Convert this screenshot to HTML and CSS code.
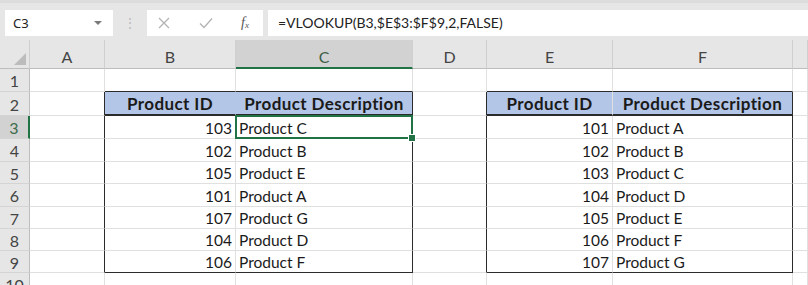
FILE: index.html
```html
<!DOCTYPE html>
<html>
<head>
<meta charset="utf-8">
<link rel="stylesheet" href="styles.css">
</head>
<body>
<div class="app">
  <div class="fbar">
    <div class="namebox"><span class="nb-text">C3</span><span class="nb-arrow"></span></div>
    <div class="grip">⋮</div>
    <div class="fbtns">
      <svg class="ic" width="14" height="14" viewBox="0 0 14 14"><path d="M2 2 L12 12 M12 2 L2 12" stroke="#b3b3b3" stroke-width="1.3" fill="none"/></svg>
      <svg class="ic" width="16" height="14" viewBox="0 0 16 14"><path d="M2 7.5 L6 11.5 L14 2.5" stroke="#b3b3b3" stroke-width="1.3" fill="none"/></svg>
      <span class="fx">f<sub>x</sub></span>
    </div>
    <div class="formula">=VLOOKUP(B3,$E$3:$F$9,2,FALSE)</div>
  </div>
  <div class="sheet">
    <div class="ch corner"><span class="tri"></span></div>
    <div class="ch">A</div>
    <div class="ch">B</div>
    <div class="ch sel">C</div>
    <div class="ch">D</div>
    <div class="ch">E</div>
    <div class="ch">F</div>
    <div class="ch"></div>

    <div class="rh">1</div>
    <div class="c"></div><div class="c tb"></div><div class="c tb"></div><div class="c"></div><div class="c tb"></div><div class="c tb"></div><div class="c"></div>

    <div class="rh r2">2</div>
    <div class="c lb"></div><div class="c hd hsep">Product ID</div><div class="c hd rb">Product Description</div><div class="c lb"></div><div class="c hd">Product ID</div><div class="c hd rb">Product Description</div><div class="c"></div>

    <div class="rh rsel">3</div>
    <div class="c lb"></div><div class="c num top">103</div><div class="c txt rb top active">Product C</div><div class="c lb"></div><div class="c num top">101</div><div class="c txt rb top">Product A</div><div class="c"></div>

    <div class="rh">4</div>
    <div class="c lb"></div><div class="c num">102</div><div class="c txt rb">Product B</div><div class="c lb"></div><div class="c num">102</div><div class="c txt rb">Product B</div><div class="c"></div>

    <div class="rh">5</div>
    <div class="c lb"></div><div class="c num">105</div><div class="c txt rb">Product E</div><div class="c lb"></div><div class="c num">103</div><div class="c txt rb">Product C</div><div class="c"></div>

    <div class="rh">6</div>
    <div class="c lb"></div><div class="c num">101</div><div class="c txt rb">Product A</div><div class="c lb"></div><div class="c num">104</div><div class="c txt rb">Product D</div><div class="c"></div>

    <div class="rh">7</div>
    <div class="c lb"></div><div class="c num">107</div><div class="c txt rb">Product G</div><div class="c lb"></div><div class="c num">105</div><div class="c txt rb">Product E</div><div class="c"></div>

    <div class="rh">8</div>
    <div class="c lb"></div><div class="c num">104</div><div class="c txt rb">Product D</div><div class="c lb"></div><div class="c num">106</div><div class="c txt rb">Product F</div><div class="c"></div>

    <div class="rh">9</div>
    <div class="c lb"></div><div class="c num bb">106</div><div class="c txt rb bb">Product F</div><div class="c lb"></div><div class="c num bb">107</div><div class="c txt rb bb">Product G</div><div class="c"></div>

    <div class="rh">10</div>
    <div class="c"></div><div class="c"></div><div class="c"></div><div class="c"></div><div class="c"></div><div class="c"></div><div class="c"></div>
  </div>
</div>
</body>
</html>
```

FILE: styles.css
```css
* { box-sizing: border-box; }
html, body { margin: 0; padding: 0; }
body {
  width: 808px;
  height: 285px;
  overflow: hidden;
  background: #ffffff;
  font-family: Lato, "Open Sans", sans-serif;
  color: #1e1e1e;
}
.app { width: 808px; }

.fbar {
  height: 40px;
  background: #e6e6e6;
  display: flex;
  align-items: flex-start;
  padding-top: 10px;
  padding-left: 5px;
  border-top: 3px solid #dcdcdc;
}
.namebox {
  width: 108px;
  height: 26px;
  background: #fff;
  display: flex;
  align-items: center;
  justify-content: space-between;
  padding: 0 11px 0 8px;
  margin-top: -3px;
}
.nb-text {
  font-family: "Noto Sans", "Open Sans", sans-serif;
  font-size: 13px;
  color: #222;
}
.nb-arrow {
  width: 0; height: 0;
  border-left: 4px solid transparent;
  border-right: 4px solid transparent;
  border-top: 4px solid #7a7a7a;
}
.grip {
  width: 34px;
  text-align: center;
  color: #bdbdbd;
  font-size: 14px;
  line-height: 26px;
  margin-top: -3px;
}
.fbtns {
  width: 116px;
  height: 26px;
  background: #fff;
  display: flex;
  align-items: center;
  justify-content: space-between;
  padding: 0 14px 0 10px;
  margin-top: -3px;
}
.fx {
  font-family: "Liberation Serif", serif;
  font-style: italic;
  font-size: 14px;
  color: #555;
}
.fx sub { font-size: 9px; vertical-align: -1px; }
.formula {
  flex: 1;
  height: 26px;
  margin-left: 5px;
  background: #fff;
  font-size: 14px;
  line-height: 26px;
  padding-left: 10px;
  color: #222;
  margin-top: -3px;
}

.sheet {
  display: grid;
  grid-template-columns: 30px 75px 131px 177px 74px 126px 180px 15px;
  grid-template-rows: 29px 23px 24px 23px 23px 22px 23px 22px 22px 22px 23px;
}
.ch {
  background: #e6e6e6;
  border-right: 1px solid #cfcfcf;
  border-bottom: 1px solid #bdbdbd;
  display: flex;
  align-items: center;
  justify-content: center;
  padding-top: 5px;
  font-size: 16px;
  color: #444;
}
.ch.sel {
  background: #d2d2d2;
  border-bottom: 2px solid #217346;
  color: #3d5f47;
  padding-top: 6px;
}
.corner { position: relative; }
.tri {
  position: absolute;
  right: 3px;
  bottom: 3px;
  width: 0; height: 0;
  border-left: 12px solid transparent;
  border-bottom: 12px solid #bcbcbc;
}
.rh {
  background: #e6e6e6;
  border-right: 1px solid #bdbdbd;
  border-bottom: 1px solid #d4d4d4;
  display: flex;
  align-items: center;
  justify-content: center;
  font-size: 16px;
  color: #444;
  padding-top: 1px;
}
.rh.rsel {
  background: #d2d2d2;
  border-right: 2px solid #217346;
  color: #3d6b4b;
}
.c {
  border-right: 1px solid #e0e0e0;
  border-bottom: 1px solid #e0e0e0;
  font-size: 15.5px;
  display: flex;
  align-items: center;
  white-space: nowrap;
  padding-top: 1px;
  color: #1a1a1a;
}
.tb { border-bottom-color: #2b2b2b; }
.lb { border-right-color: #2b2b2b; }
.rb { border-right-color: #2b2b2b; }
.bb { border-bottom-color: #2b2b2b; }
.hd {
  background: #b4c6e7;
  border-bottom: 2px solid #2b2b2b;
  font-weight: 700;
  font-size: 17px;
  letter-spacing: 0.4px;
  justify-content: center;
  color: #1a1a1a;
}
.hd.hsep { border-right-color: #b4c6e7; }
.num { justify-content: flex-end; padding-right: 3px; }
.txt { padding-left: 3px; }
.active { position: relative; }
.active::after {
  content: "";
  position: absolute;
  left: -1px; top: -1px; right: -1px; bottom: -1px;
  border: 2px solid #217346;
}
.active::before {
  content: "";
  position: absolute;
  right: -4px; bottom: -4px;
  width: 6px; height: 6px;
  background: #217346;
  border: 1px solid #fff;
  z-index: 2;
}
```
